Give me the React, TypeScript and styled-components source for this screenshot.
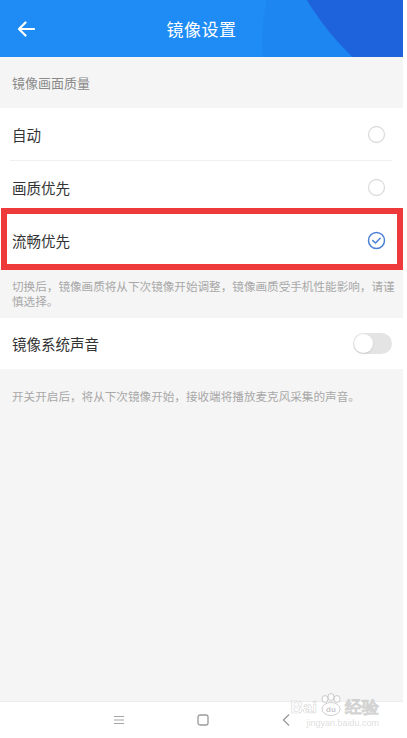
import React from "react";
import styled, { createGlobalStyle } from "styled-components";

const Global = createGlobalStyle`
  html, body { margin: 0; padding: 0; background: #ffffff; }
  body { font-family: "Noto Sans CJK SC", "Noto Sans", sans-serif; }
  * { box-sizing: border-box; }
`;

const Screen = styled.div`
  width: 403px;
  height: 738px;
  background: #f5f5f5;
  display: flex;
  flex-direction: column;
  position: relative;
  overflow: hidden;
`;

const Header = styled.header`
  position: relative;
  height: 57px;
  flex: none;
  background: #1f8cf5;
  display: flex;
  align-items: center;
  justify-content: center;
  overflow: hidden;
`;

const HeaderDeco = styled.svg`
  position: absolute;
  inset: 0;
  width: 100%;
  height: 100%;
`;

const BackButton = styled.button`
  position: absolute;
  left: 14px;
  top: 18px;
  width: 24px;
  height: 22px;
  border: 0;
  padding: 0;
  background: transparent;
  display: flex;
  align-items: center;
  justify-content: center;
`;

const Title = styled.h1`
  position: relative;
  margin: 0;
  font-size: 17px;
  font-weight: 400;
  color: #ffffff;
  letter-spacing: 0.5px;
`;

const SectionLabel = styled.div`
  height: 51px;
  display: flex;
  align-items: center;
  padding-left: 12px;
  font-size: 13px;
  color: #8a8a8a;
`;

const List = styled.div`
  background: #ffffff;
  display: flex;
  flex-direction: column;
`;

const Row = styled.div<{ $divider?: boolean }>`
  position: relative;
  height: 53px;
  display: flex;
  align-items: center;
  justify-content: space-between;
  padding: 0 17px 0 12px;
  font-size: 14.5px;
  color: #333333;
  &::after {
    content: "";
    display: ${(p) => (p.$divider ? "block" : "none")};
    position: absolute;
    left: 10px;
    right: 11px;
    bottom: 0;
    height: 1px;
    background: #efefef;
  }
`;

const SwitchRow = styled(Row)`
  height: 51px;
  padding-right: 11px;
`;

const Highlight = styled.div`
  position: absolute;
  left: 1px;
  right: 0;
  top: -6px;
  bottom: -3px;
  border: 6px solid #ee3a3a;
  pointer-events: none;
`;

const Note = styled.p<{ $pad: string }>`
  margin: 0;
  padding: ${(p) => p.$pad};
  font-size: 11.6px;
  line-height: 14.5px;
  color: #a8a8a8;
`;

const Toggle = styled.div`
  width: 39px;
  height: 21px;
  border-radius: 11px;
  background: #e4e4e4;
  position: relative;
  &::before {
    content: "";
    position: absolute;
    left: 1px;
    top: 1px;
    width: 19px;
    height: 19px;
    border-radius: 50%;
    background: #ffffff;
    box-shadow: 0 1px 2px rgba(0, 0, 0, 0.12);
  }
`;

const Spacer = styled.div`
  flex: 1;
`;

const NavBar = styled.nav`
  position: relative;
  height: 37px;
  flex: none;
  background: #ffffff;
  border-top: 1px solid #ececec;
  display: flex;
  align-items: center;
  justify-content: center;
  gap: 70px;
  padding-left: 2px;
`;

const NavIcon = styled.svg`
  width: 14px;
  height: 14px;
`;

const Watermark = styled.div`
  position: absolute;
  right: 24px;
  bottom: 9px;
  display: flex;
  flex-direction: column;
  align-items: flex-end;
  font-family: "Liberation Sans", sans-serif;
  pointer-events: none;
`;

const WmTop = styled.div`
  display: flex;
  align-items: flex-end;
  gap: 1px;
  font-size: 17px;
  font-weight: 700;
  line-height: 18px;
  color: rgba(255, 255, 255, 0.7);
  -webkit-text-stroke: 0.6px rgba(175, 175, 175, 0.55);
`;

const WmBottom = styled.div`
  font-size: 9px;
  line-height: 12px;
  color: rgba(200, 200, 200, 0.6);
`;

const Radio = ({ checked }: { checked?: boolean }) =>
  checked ? (
    <svg width="19" height="19" viewBox="0 0 19 19">
      <circle cx="9.5" cy="9.5" r="8" fill="none" stroke="#4a7fd6" strokeWidth="1.5" />
      <path d="M5.8 9.6 L8.5 12 L13.2 7.3" fill="none" stroke="#4a7fd6" strokeWidth="1.5" strokeLinecap="round" strokeLinejoin="round" />
    </svg>
  ) : (
    <svg width="19" height="19" viewBox="0 0 19 19">
      <circle cx="9.5" cy="9.5" r="8" fill="none" stroke="#dcdcdc" strokeWidth="1.3" />
    </svg>
  );

const Paw = () => (
  <svg width="26" height="24" viewBox="0 0 26 24">
    <g fill="rgba(255,255,255,0.7)" stroke="rgba(175,175,175,0.6)" strokeWidth="1">
      <ellipse cx="7" cy="6" rx="3" ry="3.5" />
      <ellipse cx="13" cy="4" rx="3" ry="3.5" />
      <ellipse cx="19" cy="6" rx="3" ry="3.5" />
      <ellipse cx="13" cy="16" rx="9" ry="6.5" />
    </g>
    <text x="13" y="19" textAnchor="middle" fontSize="8" fontFamily="Liberation Sans, sans-serif" fill="rgba(175,175,175,0.7)">du</text>
  </svg>
);

export default function App() {
  return (
    <>
      <Global />
      <Screen>
        <Header>
          <HeaderDeco viewBox="0 0 403 57" preserveAspectRatio="none">
            <circle cx="430" cy="40" r="168" fill="#1d86f1" />
            <circle cx="540" cy="-140" r="272" fill="#1f63dc" />
          </HeaderDeco>
          <BackButton aria-label="back">
            <svg width="18" height="16" viewBox="0 0 18 16">
              <path d="M17 8 H2 M8.5 1.5 L2 8 L8.5 14.5" fill="none" stroke="#ffffff" strokeWidth="2.2" strokeLinecap="round" strokeLinejoin="round" />
            </svg>
          </BackButton>
          <Title>镜像设置</Title>
        </Header>

        <SectionLabel>镜像画面质量</SectionLabel>
        <List>
          <Row $divider>
            <span>自动</span>
            <Radio />
          </Row>
          <Row>
            <span>画质优先</span>
            <Radio />
          </Row>
          <Row>
            <span>流畅优先</span>
            <Radio checked />
            <Highlight />
          </Row>
        </List>
        <Note $pad="12px 8px 10px 12px">
          切换后，镜像画质将从下次镜像开始调整，镜像画质受手机性能影响，请谨慎选择。
        </Note>
        <List>
          <SwitchRow>
            <span>镜像系统声音</span>
            <Toggle />
          </SwitchRow>
        </List>
        <Note $pad="20px 12px 0 12px">开关开启后，将从下次镜像开始，接收端将播放麦克风采集的声音。</Note>
        <Spacer />
        <NavBar>
          <NavIcon viewBox="0 0 14 14">
            <path d="M2 3.5 H12 M2 7 H12 M2 10.5 H12" stroke="#a6a6a6" strokeWidth="1.2" />
          </NavIcon>
          <NavIcon viewBox="0 0 14 14">
            <rect x="2" y="2" width="10" height="10" rx="2" fill="none" stroke="#9a9a9a" strokeWidth="1.3" />
          </NavIcon>
          <NavIcon viewBox="0 0 14 14">
            <path d="M9 1.5 L3.5 7 L9 12.5" fill="none" stroke="#9a9a9a" strokeWidth="1.3" />
          </NavIcon>
          <Watermark>
            <WmTop>
              <span>Bai</span>
              <Paw />
              <span>经验</span>
            </WmTop>
            <WmBottom>jingyan.baidu.com</WmBottom>
          </Watermark>
        </NavBar>
      </Screen>
    </>
  );
}
